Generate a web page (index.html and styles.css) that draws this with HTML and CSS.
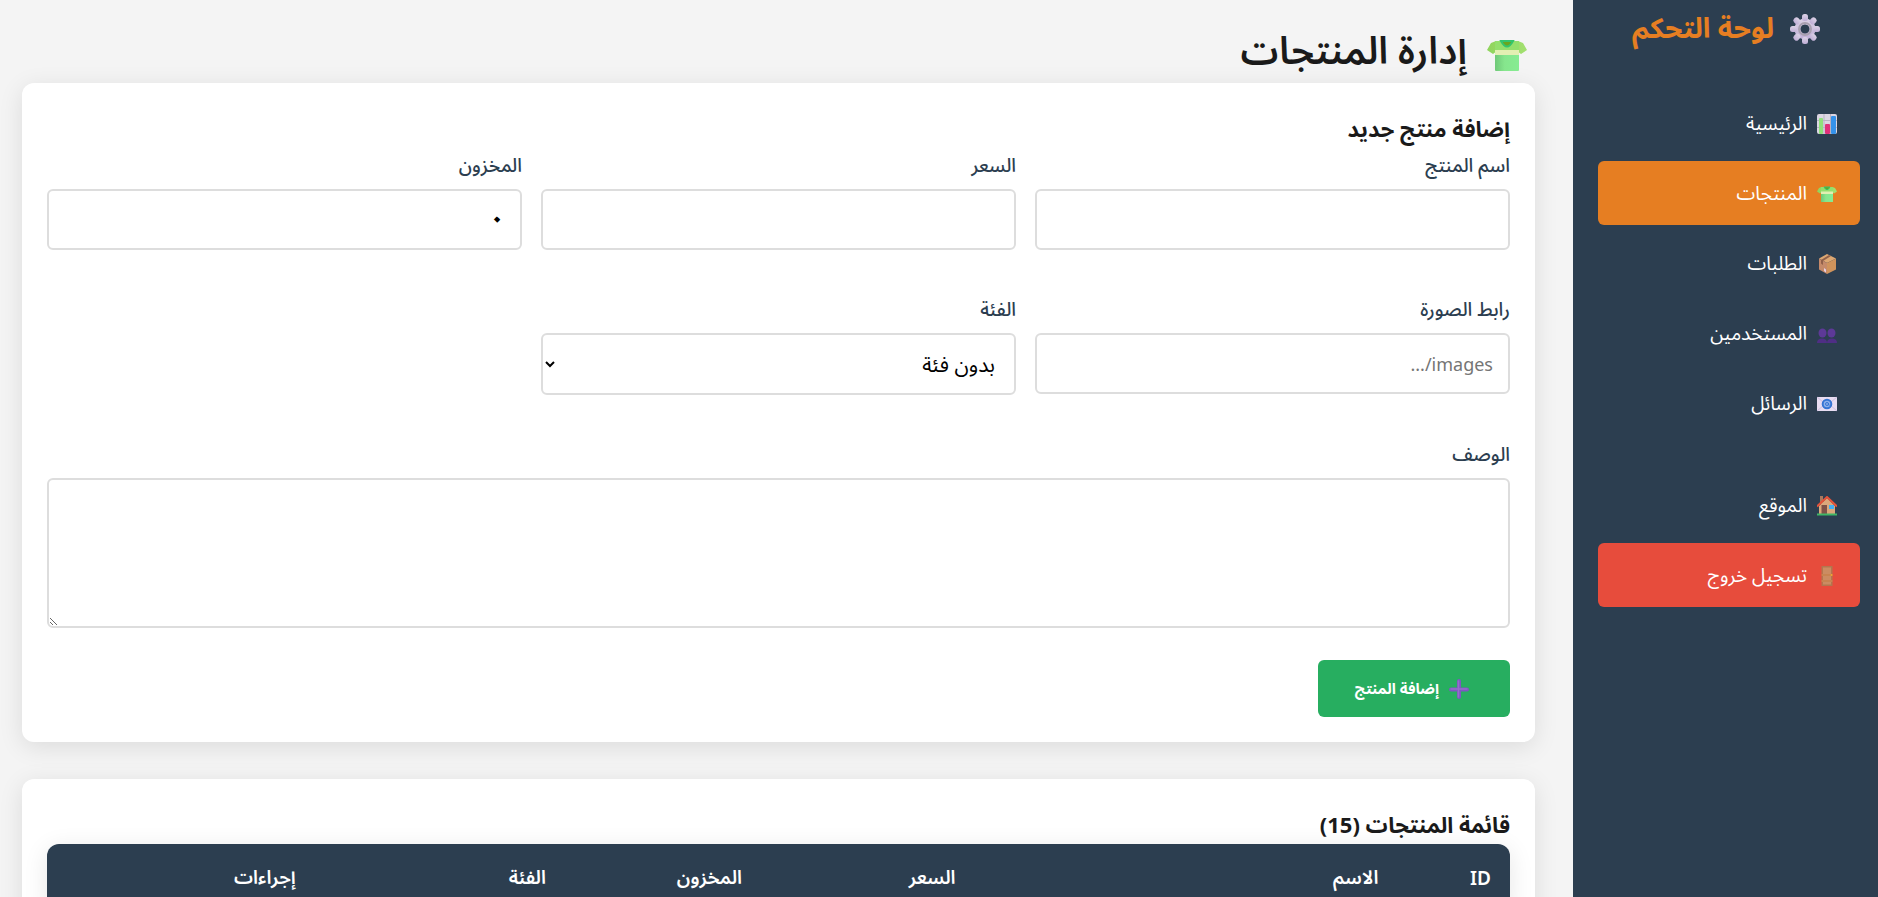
FILE: index.html
```html
<!DOCTYPE html>
<html lang="ar" dir="rtl">
<head>
<meta charset="utf-8">
<meta name="viewport" content="width=device-width, initial-scale=1">
<title>إدارة المنتجات</title>
<link rel="stylesheet" href="styles.css">
</head>
<body>
<svg class="defs" aria-hidden="true">
  <defs>
    <linearGradient id="body-green" x1="0" x2="1"><stop offset="0" stop-color="#6fc878"/><stop offset=".4" stop-color="#86e68d"/><stop offset="1" stop-color="#86ec92"/></linearGradient>
    <linearGradient id="sleeve" x1="0" x2="1"><stop offset="0" stop-color="#8fd45c"/><stop offset="1" stop-color="#a3e070"/></linearGradient>
    <linearGradient id="metal" x1="0" y1="0" x2="0" y2="1"><stop offset="0" stop-color="#dcd2e6"/><stop offset="1" stop-color="#bfaed6"/></linearGradient>
    <symbol id="shirt" viewBox="0 0 40 40">
      <path d="M9 6 L4 8 L0 15 L6 19 L10 16 V6z M31 6 L36 8 L40 15 L34 19 L30 16 V6z" fill="url(#sleeve)"/>
      <path d="M8 6h24v29q0 1-1 1H9q-1 0-1-1z" fill="url(#body-green)"/>
      <path d="M8 6h24v10H8z" fill="#93df6c"/>
      <path d="M8 15h24v5H8z" fill="#e2efb2"/>
      <path d="M14 6q6 11 12 0z" fill="#6aa51e" stroke="#34c46c" stroke-width="2"/>
    </symbol>
    <symbol id="gear" viewBox="0 0 30 30">
      <g fill="url(#metal)">
        <path fill-rule="evenodd" d="M15 4.500a10.500 10.500 0 1 0 .01 0zM15 10.500a4.500 4.500 0 1 1-.01 0z"/>
        <g id="teeth"><rect x="12" y="0" width="6" height="7" rx="2.500"/><rect x="12" y="23" width="6" height="7" rx="2.500"/><rect x="0" y="12" width="7" height="6" rx="2.500"/><rect x="23" y="12" width="7" height="6" rx="2.500"/></g>
        <use href="#teeth" transform="rotate(45 15 15)"/>
      </g>
      <circle cx="15" cy="15" r="6" fill="none" stroke="#a9a0b0" stroke-width="2"/>
    </symbol>
    <symbol id="chart" viewBox="0 0 20 20">
      <rect width="20" height="20" rx="2" fill="#dcd6e2"/>
      <path d="M0 6.500h20M0 13.500h20M7 0v20M13.500 0v20" stroke="#b9b2c2" stroke-width="1"/>
      <rect x="2" y="4" width="4" height="16" rx="1" fill="#8fe07a"/>
      <rect x="8" y="10" width="5" height="10" rx="1" fill="#e0307a"/>
      <rect x="14" y="2" width="5" height="18" rx="1" fill="#3592ea"/>
    </symbol>
    <symbol id="box" viewBox="0 0 20 20">
      <path d="M10 0l9 4.500-9 4.500-8-4.500z" fill="#dda873"/>
      <path d="M2 4.500l8 4.500v11l-8-4.500z" fill="#c58a6a"/>
      <path d="M10 9l9-4.500v11L10 20z" fill="#cf935c"/>
      <path d="M12 1l2 1-8 5v4l-2-1.500V6z" fill="#90604a"/>
      <path d="M7 14l2 1.500v3L7 17z" fill="#e6cfe0"/>
    </symbol>
    <symbol id="users" viewBox="0 0 20 20">
      <g fill="#5d3997"><ellipse cx="5.500" cy="9" rx="4" ry="4.500"/><ellipse cx="14.500" cy="9" rx="4" ry="4.500"/></g>
      <path d="M0 19q0-4.500 5-4.500t5 4.500zM10 19q0-4.500 5-4.500t5 4.500z" fill="#4f2e85"/>
    </symbol>
    <symbol id="mail" viewBox="0 0 20 20">
      <rect y="3" width="20" height="14" fill="#e8ddf2"/>
      <path d="M0 17l7-6M20 17l-7-6M0 3l6 5M20 3l-6 5" stroke="#cdbfe0" stroke-width="1"/>
      <circle cx="10" cy="10" r="4.300" fill="#8db0ea" stroke="#3575d4" stroke-width="2"/>
      <circle cx="10" cy="10" r="1.500" fill="none" stroke="#3575d4"/>
      <path d="M11.500 9v2q1 1 1.500-.5" fill="none" stroke="#3575d4" stroke-width=".8"/>
    </symbol>
    <symbol id="house" viewBox="0 0 20 20">
      <path d="M3 0h3v8H3z" fill="#a9785e"/>
      <path d="M2 10l8-8 8 8v8H2z" fill="#dba87c"/>
      <path d="M0 10.500L10 1l10 9.500" fill="none" stroke="#e5533a" stroke-width="2"/>
      <path d="M4.500 9h5.500v9H4.500z" fill="#7e5248"/>
      <path d="M12 9h5v4h-5z" fill="#44aef2"/>
      <path d="M0 17.500h20v2H0z" fill="#3fb767"/>
    </symbol>
    <symbol id="door" viewBox="0 0 20 20">
      <rect x="4.500" width="11" height="20" fill="#b3764e"/>
      <path d="M6 1.500h8v6.500H6zM6 10h8v4H6zM6 16h8v2.500H6z" fill="#cb8c62"/>
      <path d="M4.500 9h11M4.500 15h11" stroke="#dc9154" stroke-width="1"/>
      <circle cx="14.500" cy="9" r="1" fill="#f0a830"/>
    </symbol>
    <symbol id="plus" viewBox="0 0 20 20">
      <path d="M10 2v16M2 10.500h16" stroke="#7e57c2" stroke-width="4" stroke-linecap="round"/>
      <path d="M9.500 2v16M2 10h16" stroke="#956fcb" stroke-width="1.500" stroke-linecap="round"/>
    </symbol>
  </defs>
</svg>

<div class="layout">
  <aside class="sidebar">
    <h2 class="brand"><svg class="brand-icon" aria-hidden="true"><use href="#gear"/></svg>لوحة التحكم</h2>
    <nav class="nav">
      <a class="nav-link" href="#home"><svg class="icon" aria-hidden="true"><use href="#chart"/></svg>الرئيسية</a>
      <a class="nav-link active" href="#products" aria-current="page"><svg class="icon" aria-hidden="true"><use href="#shirt"/></svg>المنتجات</a>
      <a class="nav-link" href="#orders"><svg class="icon" aria-hidden="true"><use href="#box"/></svg>الطلبات</a>
      <a class="nav-link" href="#users-list"><svg class="icon" aria-hidden="true"><use href="#users"/></svg>المستخدمين</a>
      <a class="nav-link" href="#messages"><svg class="icon" aria-hidden="true"><use href="#mail"/></svg>الرسائل</a>
    </nav>
    <nav class="nav nav-secondary">
      <a class="nav-link" href="#site"><svg class="icon" aria-hidden="true"><use href="#house"/></svg>الموقع</a>
      <a class="nav-link logout" href="#logout"><svg class="icon" aria-hidden="true"><use href="#door"/></svg>تسجيل خروج</a>
    </nav>
  </aside>

  <main class="content">
    <h1 class="page-title"><svg class="title-icon" aria-hidden="true"><use href="#shirt"/></svg>إدارة المنتجات</h1>

    <section class="card">
      <h3 class="card-title">إضافة منتج جديد</h3>
      <form class="form">
        <div class="fields">
          <div class="field"><label for="name">اسم المنتج</label><input id="name" type="text"></div>
          <div class="field"><label for="price">السعر</label><input id="price" type="text" inputmode="decimal"></div>
          <div class="field"><label for="stock">المخزون</label><input id="stock" class="stock" type="text" inputmode="numeric" value="٠"></div>
          <div class="field"><label for="image">رابط الصورة</label><input id="image" type="text" placeholder="images/..."></div>
          <div class="field"><label for="category">الفئة</label><select id="category"><option>بدون فئة</option></select></div>
          <div class="field wide"><label for="description">الوصف</label><textarea id="description"></textarea></div>
        </div>
        <button class="submit" type="submit"><svg class="icon" aria-hidden="true"><use href="#plus"/></svg>إضافة المنتج</button>
      </form>
    </section>

    <section class="card">
      <h3 class="card-title">قائمة المنتجات (15)</h3>
      <table class="table">
        <colgroup><col class="col-id"><col class="col-name"><col class="col-price"><col class="col-stock"><col class="col-category"><col></colgroup>
        <thead>
          <tr><th scope="col">ID</th><th scope="col">الاسم</th><th scope="col">السعر</th><th scope="col">المخزون</th><th scope="col">الفئة</th><th scope="col">إجراءات</th></tr>
        </thead>
      </table>
    </section>
  </main>
</div>
</body>
</html>
```
FILE: styles.css
```css
* { box-sizing: border-box; margin: 0; padding: 0; }

html { scrollbar-width: none; }

body {
  background: #f4f4f4;
  color: #1a1a1a;
  font-family: "Segoe UI", "Noto Sans", "Noto Sans Arabic", "DejaVu Sans", sans-serif;
  font-size: 19px;
}

.defs { position: absolute; width: 0; height: 0; }

.layout { display: flex; min-height: 100vh; }

.sidebar {
  flex: 0 0 305px;
  padding: 0 18px 24px 25px;
  background: #2c3e50;
}

.brand {
  display: flex;
  align-items: center;
  justify-content: center;
  gap: 16px;
  height: 58px;
  margin-bottom: 33px;
  padding-left: 6px;
  padding-right: 12px;
  color: #e67e22;
  font-size: 28px;
  white-space: nowrap;
}

.brand-icon { width: 30px; height: 30px; }

.icon { flex: none; width: 20px; height: 20px; }

.nav { display: flex; flex-direction: column; gap: 6px; }

.nav-secondary { margin-top: 38px; }

.nav-link {
  display: flex;
  align-items: center;
  gap: 10px;
  height: 64px;
  padding: 2px 23px 0;
  border-radius: 6px;
  color: #fff;
  font-size: 19px;
  text-decoration: none;
}

.active { background: #e67e22; }
.logout { background: #e74c3c; }

.content { flex: 1; min-width: 0; padding: 25px 38px 37px 22px; }

.page-title {
  display: flex;
  align-items: center;
  gap: 20px;
  height: 58px;
  padding-right: 8px;
  padding-bottom: 4px;
  font-size: 38px;
  font-weight: 600;
}

.title-icon { width: 40px; height: 40px; margin-top: 5px; }

.card {
  margin-bottom: 37px;
  padding: 25px;
  border-radius: 12px;
  background: #fff;
  box-shadow: 0 5px 25px rgba(0, 0, 0, 0.1);
}

.card-title { font-size: 22px; font-weight: 700; line-height: 40px; }

.fields {
  display: grid;
  grid-template-columns: repeat(3, 1fr);
  column-gap: 19px;
  align-items: start;
}

.field { display: flex; flex-direction: column; padding-bottom: 42px; }

.wide { grid-column: 1 / -1; padding-bottom: 32px; }

.field label {
  margin-bottom: 6px;
  color: #2c3e50;
  font-size: 19px;
  font-weight: 500;
  line-height: 35px;
}

.field input,
.field select,
.field textarea {
  width: 100%;
  height: 61px;
  padding: 0 15px;
  border: 2px solid #ddd;
  border-radius: 6px;
  background-color: #fff;
  color: #000;
  font: inherit;
}

.field input { font-size: 18px; }

.field select { height: 62px; font-size: 21px; }

.field .stock { font-size: 28px; font-weight: 700; }

.field textarea {
  height: 150px;
  padding: 15px;
  resize: vertical;
}

.submit {
  display: flex;
  align-items: center;
  justify-content: center;
  gap: 10px;
  min-width: 192px;
  height: 57px;
  padding: 0 41px 0 37px;
  border: 0;
  border-radius: 6px;
  background: #27ae60;
  color: #fff;
  font: bold 15px "Noto Sans", "Noto Sans Arabic", sans-serif;
}

.table {
  width: 100%;
  border-collapse: collapse;
  table-layout: fixed;
  border-radius: 12px;
  overflow: hidden;
  box-shadow: 0 5px 25px rgba(0, 0, 0, 0.1);
}

.table th {
  height: 67px;
  padding: 0 19px;
  background: #2c3e50;
  color: #fff;
  font-size: 19px;
  font-weight: 600;
  text-align: right;
}

.col-id { width: 7.7%; }
.col-name { width: 28.9%; }
.col-price { width: 14.6%; }
.col-stock { width: 13.4%; }
.col-category { width: 17.1%; }
```
